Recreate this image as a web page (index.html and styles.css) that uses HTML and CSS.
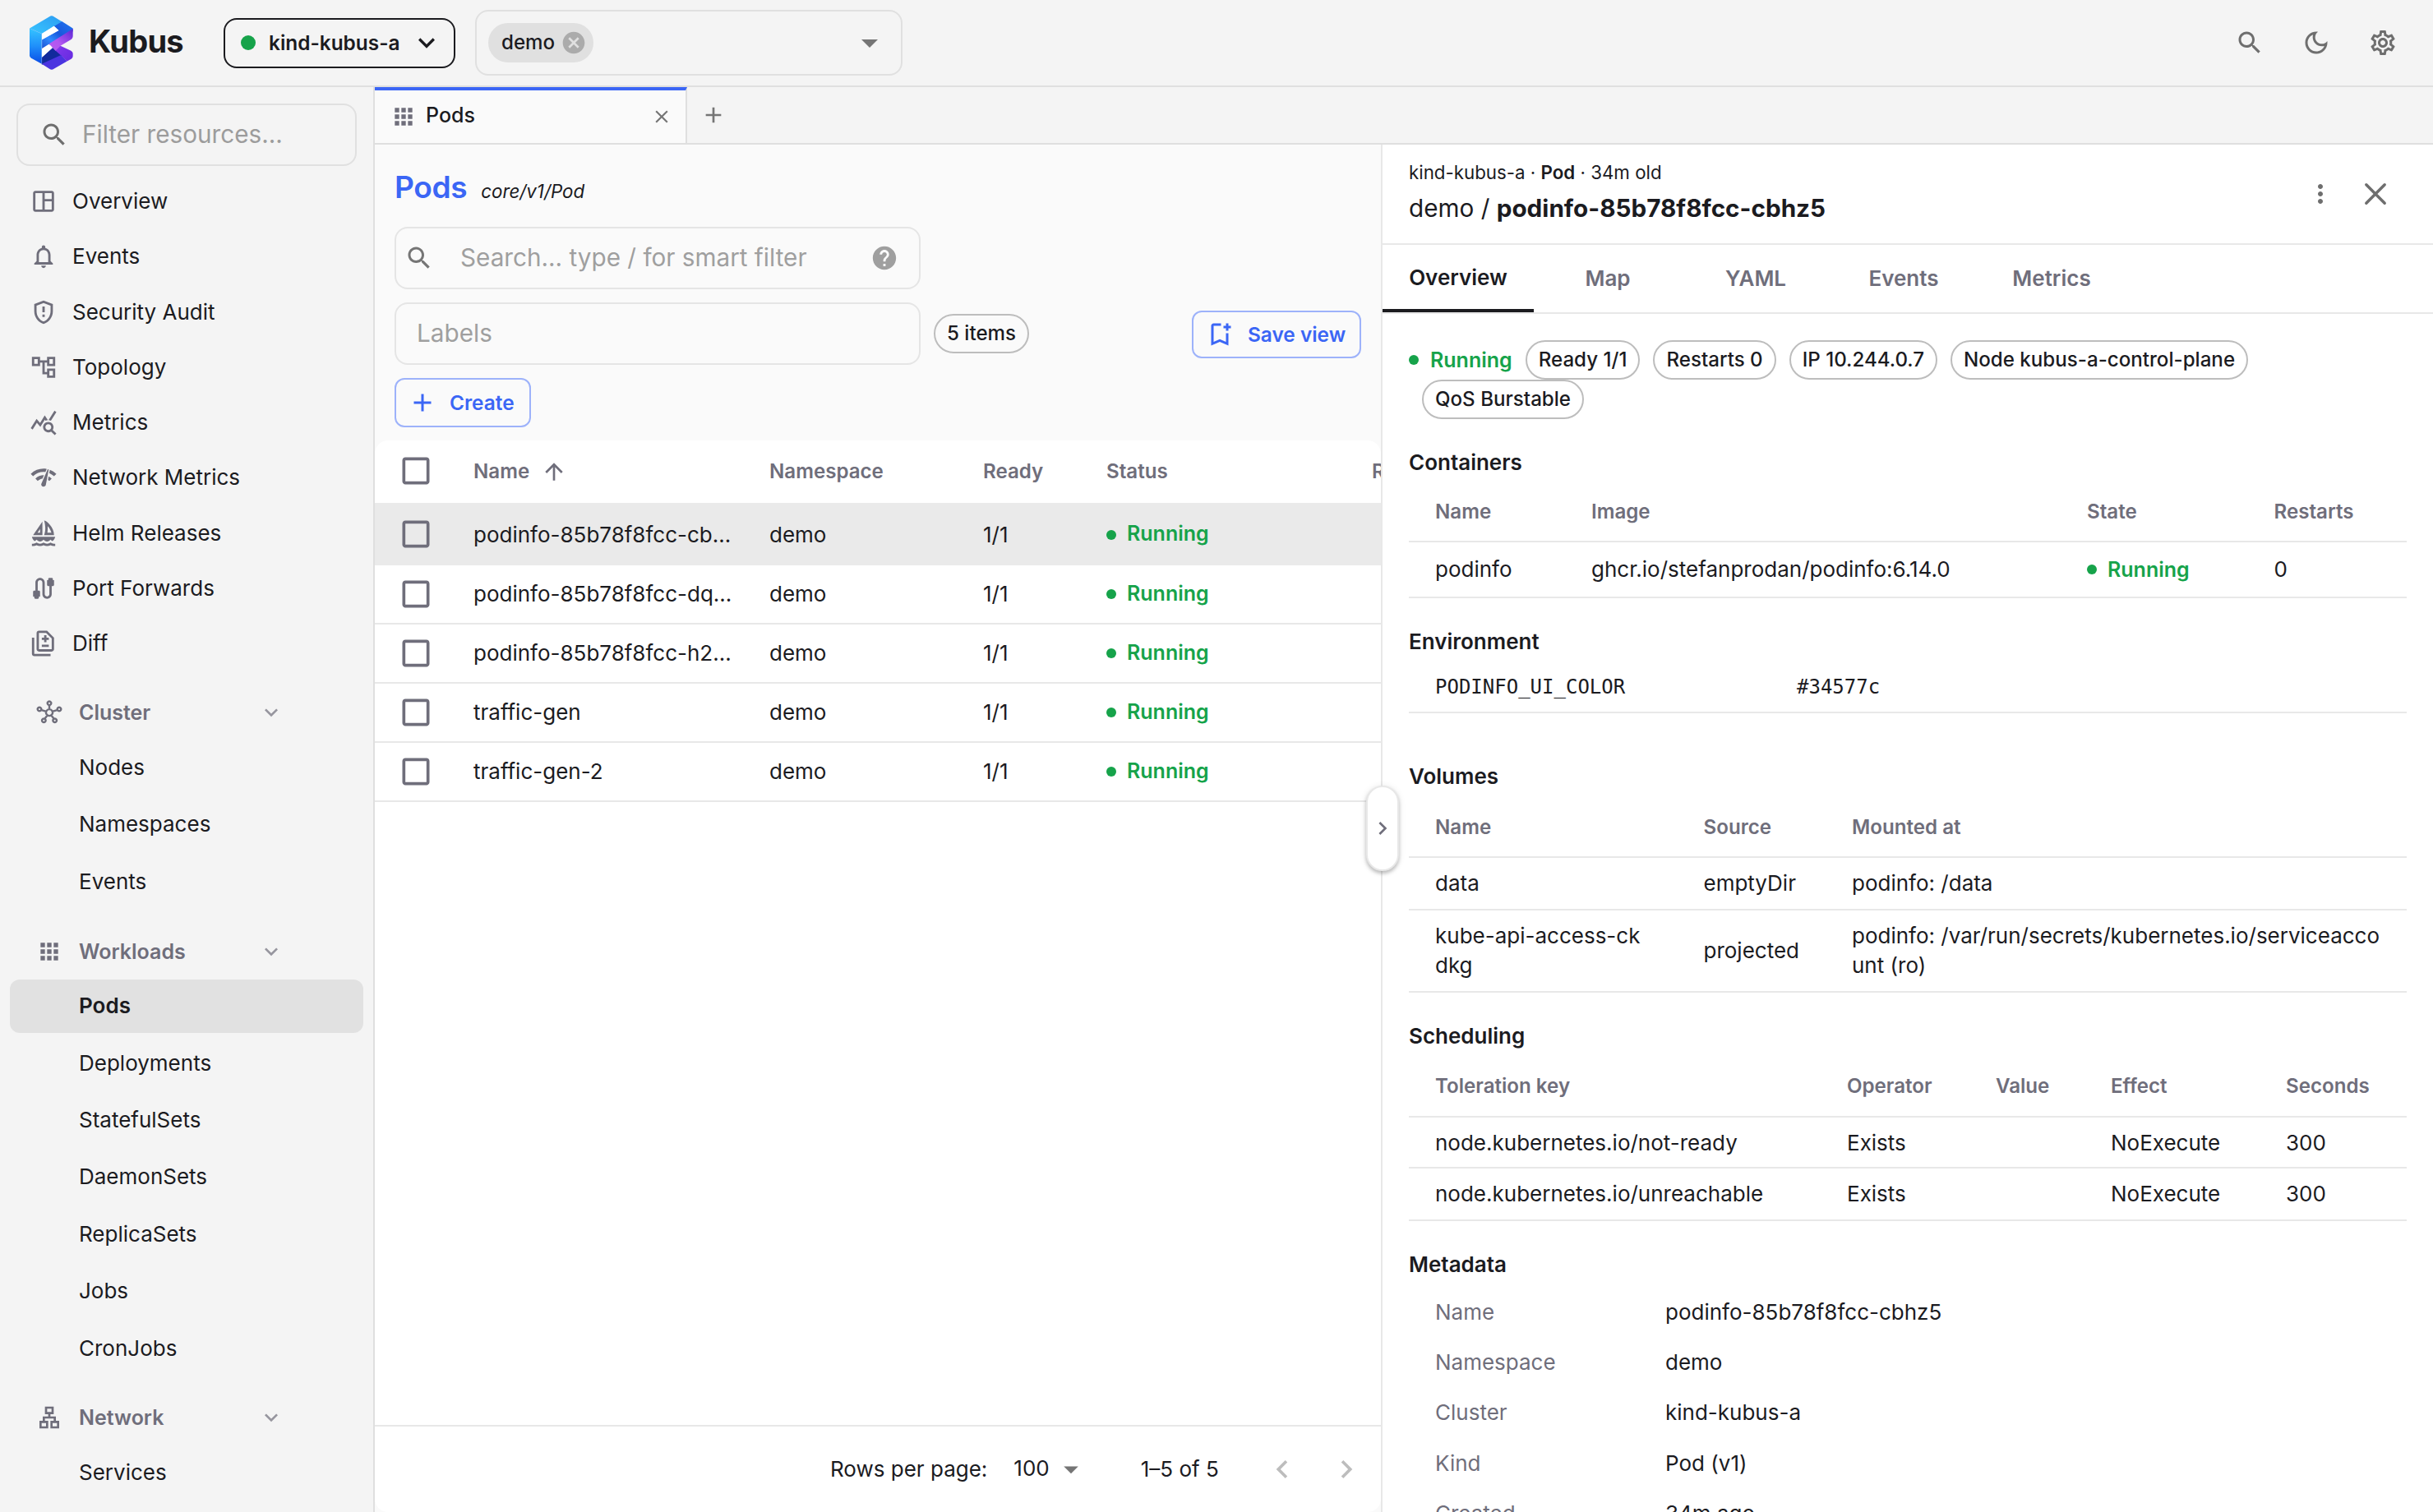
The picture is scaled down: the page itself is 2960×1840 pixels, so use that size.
FILE: index.html
```html
<!DOCTYPE html>
<html lang="en">
<head>
<meta charset="utf-8">
<title>Kubus</title>
<link rel="stylesheet" href="styles.css">
</head>
<body>
<svg class="defs" width="0" height="0" aria-hidden="true">
  <symbol id="search" viewBox="0 0 24 24"><path d="M15.5 14h-.79l-.28-.27C15.41 12.59 16 11.11 16 9.5 16 5.91 13.09 3 9.5 3S3 5.91 3 9.5 5.91 16 9.5 16c1.61 0 3.09-.59 4.23-1.57l.27.28v.79l5 4.99L20.49 19zm-6 0C7.01 14 5 11.99 5 9.5S7.01 5 9.5 5 14 7.01 14 9.5 11.99 14 9.5 14"/></symbol>
  <symbol id="down" viewBox="0 0 24 24"><path d="M7.41 8.59 12 13.17l4.59-4.58L18 10l-6 6-6-6z"/></symbol>
  <symbol id="caret" viewBox="0 0 24 24"><path d="m7 10 5 5 5-5z"/></symbol>
  <symbol id="left" viewBox="0 0 24 24"><path d="M15.41 7.41 14 6l-6 6 6 6 1.41-1.41L10.83 12z"/></symbol>
  <symbol id="right" viewBox="0 0 24 24"><path d="M10 6 8.59 7.41 13.17 12l-4.58 4.59L10 18l6-6z"/></symbol>
  <symbol id="close" viewBox="0 0 24 24"><path d="M19 6.41 17.59 5 12 10.59 6.41 5 5 6.41 10.59 12 5 17.59 6.41 19 12 13.41 17.59 19 19 17.59 13.41 12z"/></symbol>
  <symbol id="add" viewBox="0 0 24 24"><path d="M19 13h-6v6h-2v-6H5v-2h6V5h2v6h6z"/></symbol>
  <symbol id="apps" viewBox="0 0 24 24"><path d="M4 8h4V4H4zm6 12h4v-4h-4zm-6 0h4v-4H4zm0-6h4v-4H4zm6 0h4v-4h-4zm6-10v4h4V4zm-6 4h4V4h-4zm6 6h4v-4h-4zm0 6h4v-4h-4z"/></symbol>
  <symbol id="box" viewBox="0 0 24 24"><path d="M19 5v14H5V5zm0-2H5c-1.1 0-2 .9-2 2v14c0 1.1.9 2 2 2h14c1.1 0 2-.9 2-2V5c0-1.1-.9-2-2-2"/></symbol>
</svg>

<header class="topbar">
  <svg class="logo" viewBox="36 33 158 196">
    <defs>
      <linearGradient id="g1" x1="0" y1="1" x2="1" y2="0"><stop offset="0" stop-color="#38c6ff"/><stop offset="1" stop-color="#2c9cf2"/></linearGradient>
      <linearGradient id="g2" x1="0" y1="0" x2="0" y2="1"><stop offset="0" stop-color="#35c4ff"/><stop offset=".5" stop-color="#1f8ffa"/><stop offset="1" stop-color="#0a4be6"/></linearGradient>
      <linearGradient id="g3" x1="1" y1="0" x2="0" y2="1"><stop offset="0" stop-color="#2277f0"/><stop offset=".45" stop-color="#1857dd"/><stop offset=".7" stop-color="#2f8bff"/><stop offset="1" stop-color="#1a4fd0"/></linearGradient>
      <linearGradient id="g4" x1="1" y1="0" x2="0" y2="1"><stop offset="0" stop-color="#5a25d6"/><stop offset=".6" stop-color="#b257f0"/><stop offset="1" stop-color="#b95cf2"/></linearGradient>
      <linearGradient id="g5" x1="0" y1="0" x2="1" y2=".6"><stop offset="0" stop-color="#b153f0"/><stop offset=".5" stop-color="#7a34e8"/><stop offset="1" stop-color="#6a2de2"/></linearGradient>
    </defs>
    <path fill="url(#g3)" d="M124 70 152 53 193 79V90L107 140 81 154V120L142 86z"/>
    <path fill="#122a9c" d="M80 184 119 149 132 152 158 176 84 210H80z"/>
    <path fill="url(#g1)" d="M36 79 108 36Q116 31 124 36L153 54 80 98z"/>
    <path fill="url(#g5)" d="M107 135 148 142 186 160Q193 164 193 170V180Q193 186 187 190L172 198 150 177 128 158z"/>
    <path fill="url(#g4)" d="M193 80V108Q193 114 188 118L148 142 130 160 107 135z"/>
    <path fill="#4a34e0" d="M80 208 150 176 172 198 124 226Q116 231 108 226z"/>
    <path fill="url(#g2)" d="M36 79 80 98V208L42 187Q36 183 36 178z"/>
    <path fill="none" stroke="#7fb4ff" stroke-width="1.5" opacity=".6" d="M37 79 80 98V207"/>
    <path fill="#fff" d="M81 98 124 71 141 86 81 120zM81 152 106 136 119 150 81 184z"/>
  </svg>
  <span class="brand">Kubus</span>
  <button class="cluster"><i class="dot big"></i><span>kind-kubus-a</span><svg class="i40"><use href="#down"/></svg></button>
  <div class="ns-select">
    <span class="ns-chip">demo<svg class="i32" viewBox="0 0 24 24"><path d="M12 2C6.47 2 2 6.47 2 12s4.47 10 10 10 10-4.47 10-10S17.53 2 12 2m5 13.59L15.59 17 12 13.41 8.41 17 7 15.59 10.59 12 7 8.41 8.41 7 12 10.59 15.59 7 17 8.41 13.41 12z"/></svg></span>
    <svg class="i48"><use href="#caret"/></svg>
  </div>
  <div class="actions">
    <svg class="i36"><use href="#search"/></svg>
    <svg class="i36" viewBox="0 0 24 24"><path d="M9.37 5.51c-.18.64-.27 1.31-.27 1.99 0 4.08 3.32 7.4 7.4 7.4.68 0 1.35-.09 1.99-.27C17.45 17.19 14.93 19 12 19c-3.86 0-7-3.14-7-7 0-2.93 1.81-5.45 4.37-6.49M12 3c-4.97 0-9 4.03-9 9s4.03 9 9 9 9-4.03 9-9c0-.46-.04-.92-.1-1.36-.98 1.37-2.58 2.26-4.4 2.26-2.98 0-5.4-2.42-5.4-5.4 0-1.81.89-3.42 2.26-4.4-.44-.06-.9-.1-1.36-.1"/></svg>
    <svg class="i36" viewBox="0 0 24 24"><path d="M19.43 12.98c.04-.32.07-.64.07-.98s-.03-.66-.07-.98l2.11-1.65c.19-.15.24-.42.12-.64l-2-3.46c-.09-.16-.26-.25-.44-.25-.06 0-.12.01-.17.03l-2.49 1c-.52-.4-1.08-.73-1.69-.98l-.38-2.65C14.46 2.18 14.25 2 14 2h-4c-.25 0-.46.18-.49.42l-.38 2.65c-.61.25-1.17.59-1.69.98l-2.49-1c-.06-.02-.12-.03-.18-.03-.17 0-.34.09-.43.25l-2 3.46c-.13.22-.07.49.12.64l2.11 1.65c-.04.32-.07.65-.07.98s.03.66.07.98l-2.11 1.65c-.19.15-.24.42-.12.64l2 3.46c.09.16.26.25.44.25.06 0 .12-.01.17-.03l2.49-1c.52.4 1.08.73 1.69.98l.38 2.65c.03.24.24.42.49.42h4c.25 0 .46-.18.49-.42l.38-2.65c.61-.25 1.17-.59 1.69-.98l2.49 1c.06.02.12.03.18.03.17 0 .34-.09.43-.25l2-3.46c.12-.22.07-.49-.12-.64zm-1.98-1.71c.04.31.05.52.05.73s-.02.43-.05.73l-.14 1.13.89.7 1.08.84-.7 1.21-1.27-.51-1.04-.42-.9.68c-.43.32-.84.56-1.25.73l-1.06.43-.16 1.13-.2 1.35h-1.4l-.19-1.35-.16-1.13-1.06-.43c-.43-.18-.83-.41-1.23-.71l-.91-.7-1.06.43-1.27.51-.7-1.21 1.08-.84.89-.7-.14-1.13c-.03-.31-.05-.54-.05-.74s.02-.43.05-.73l.14-1.13-.89-.7-1.08-.84.7-1.21 1.27.51 1.04.42.9-.68c.43-.32.84-.56 1.25-.73l1.06-.43.16-1.13.2-1.35h1.39l.19 1.35.16 1.13 1.06.43c.43.18.83.41 1.23.71l.91.7 1.06-.43 1.27-.51.7 1.21-1.07.85-.89.7zM12 8c-2.21 0-4 1.79-4 4s1.79 4 4 4 4-1.79 4-4-1.79-4-4-4m0 6c-1.1 0-2-.9-2-2s.9-2 2-2 2 .9 2 2-.9 2-2 2"/></svg>
  </div>
</header>

<div class="shell">
  <nav class="sidebar">
    <div class="filter"><svg class="i36"><use href="#search"/></svg><span>Filter resources...</span></div>
    <ul class="main-nav">
      <li><svg viewBox="0 0 24 24"><path d="M19 3H5c-1.1 0-2 .9-2 2v14c0 1.1.9 2 2 2h14c1.1 0 2-.9 2-2V5c0-1.1-.9-2-2-2M5 19V5h6v14zm14 0h-6v-7h6zm0-9h-6V5h6z"/></svg>Overview</li>
      <li><svg viewBox="0 0 24 24"><path d="M12 22c1.1 0 2-.9 2-2h-4c0 1.1.9 2 2 2m6-6v-5c0-3.07-1.63-5.64-4.5-6.32V4c0-.83-.67-1.5-1.5-1.5s-1.5.67-1.5 1.5v.68C7.64 5.36 6 7.92 6 11v5l-2 2v1h16v-1zm-2 1H8v-6c0-2.48 1.51-4.5 4-4.5s4 2.02 4 4.5z"/></svg>Events</li>
      <li><svg viewBox="0 0 24 24"><path d="M12 2 4 5v6.09c0 5.05 3.41 9.76 8 10.91 4.59-1.15 8-5.86 8-10.91V5zm6 9.09c0 4-2.55 7.7-6 8.83-3.45-1.13-6-4.82-6-8.83v-4.7l6-2.25 6 2.25zM11 14h2v2h-2zm0-7h2v5h-2z"/></svg>Security Audit</li>
      <li><svg viewBox="0 0 24 24"><path d="M22 11V3h-7v3H9V3H2v8h7V8h2v10h4v3h7v-8h-7v3h-2V8h2v3zM7 9H4V5h3zm10 6h3v4h-3zm0-10h3v4h-3z"/></svg>Topology</li>
      <li><svg viewBox="0 0 24 24"><path d="M19.88 18.47c.44-.7.7-1.51.7-2.39 0-2.49-2.01-4.5-4.5-4.5s-4.5 2.01-4.5 4.5 2.01 4.5 4.49 4.5c.88 0 1.7-.26 2.39-.7L21.58 23 23 21.58zm-3.8.11c-1.38 0-2.5-1.12-2.5-2.5s1.12-2.5 2.5-2.5 2.5 1.12 2.5 2.5-1.12 2.5-2.5 2.5m-.36-8.5c-.74.02-1.45.18-2.1.45l-.55-.83-3.8 6.18-3.01-3.52-3.63 5.81L1 17l5-8 3 3.5L13 6zm2.59.5c-.64-.28-1.33-.45-2.05-.49L21.38 2 23 3.18z"/></svg>Metrics</li>
      <li><svg viewBox="0 0 24 24"><path d="M15.9 5c-.17 0-.32.09-.41.23l-.07.15-5.18 11.65c-.16.29-.26.61-.26.96 0 1.11.9 2.01 2.01 2.01.96 0 1.77-.68 1.96-1.59l.01-.03L16.4 5.5c0-.28-.22-.5-.5-.5M1 9l2 2c2.88-2.88 6.79-4.08 10.53-3.62l1.19-2.68C9.89 3.84 4.74 5.27 1 9m20 2 2-2c-1.64-1.64-3.55-2.82-5.59-3.57l-.53 2.82c1.5.62 2.9 1.53 4.12 2.75m-4 4 2-2c-.8-.8-1.7-1.42-2.66-1.89l-.55 2.92c.42.27.83.59 1.21.97M5 13l2 2c1.13-1.13 2.56-1.79 4.03-2l1.28-2.88c-2.63-.08-5.3.87-7.31 2.88"/></svg>Network Metrics</li>
      <li><svg viewBox="0 0 24 24"><path d="M11 13.5V2L3 13.5zm-2-2H6.83L9 8.38zM21 13.5C21 6.5 14.5 1 12.5 1c0 0 1 3 1 6.5s-1 6-1 6zM15.5 5.8c1.29 1.32 2.65 3.31 3.21 5.7h-3.43c.16-1.19.26-2.56.26-4 0-.6-.01-1.17-.04-1.7M22 15H2c.31 1.53 1.16 2.84 2.33 3.73.65-.31 1.22-.79 1.67-1.3.73.84 1.8 1.57 3 1.57s2.27-.73 3-1.57c.73.84 1.8 1.57 3 1.57s2.27-.73 3-1.57c.45.51 1.02.99 1.67 1.3C20.84 17.84 21.69 16.53 22 15M22 23v-2h-1c-1.04 0-2.08-.35-3-1-1.83 1.3-4.17 1.3-6 0-1.83 1.3-4.17 1.3-6 0-.91.65-1.96 1-3 1H2v2h1c1.03 0 2.05-.25 3-.75 1.89 1 4.11 1 6 0 1.89 1 4.11 1 6 0 .95.5 1.97.75 3 .75z"/></svg>Helm Releases</li>
      <li><svg viewBox="0 0 24 24"><path d="M20 5V4c0-.55-.45-1-1-1h-2c-.55 0-1 .45-1 1v1h-1v4c0 .55.45 1 1 1h1v7c0 1.1-.9 2-2 2s-2-.9-2-2V7c0-2.21-1.79-4-4-4S5 4.79 5 7v7H4c-.55 0-1 .45-1 1v4h1v1c0 .55.45 1 1 1h2c.55 0 1-.45 1-1v-1h1v-4c0-.55-.45-1-1-1H7V7c0-1.1.9-2 2-2s2 .9 2 2v10c0 2.21 1.79 4 4 4s4-1.79 4-4v-7h1c.55 0 1-.45 1-1V5z"/></svg>Port Forwards</li>
      <li><svg viewBox="0 0 24 24"><path d="M18 23H4c-1.1 0-2-.9-2-2V7h2v14h14zM14.5 7V5h-2v2h-2v2h2v2h2V9h2V7zm2 6h-6v2h6zM15 1H8c-1.1 0-1.99.9-1.99 2L6 17c0 1.1.89 2 1.99 2H19c1.1 0 2-.9 2-2V7zm4 16H8V3h6.17L19 7.83z"/></svg>Diff</li>
    </ul>
    <section class="group">
      <h3><svg class="i32" viewBox="0 0 24 24"><path fill="none" stroke="currentColor" stroke-width="1.8" d="M12 5.6v3.6M5 9.8l4.2 1.4M19 9.8l-4.2 1.4M8.2 17.2l2-2.6M15.8 17.2l-2-2.6M12 1.9a1.7 1.7 0 1 0 .01 0M3 7.3a1.7 1.7 0 1 0 .01 0M21 7.3a1.7 1.7 0 1 0 .01 0M7 17.6a1.7 1.7 0 1 0 .01 0M17 17.6a1.7 1.7 0 1 0 .01 0M12 9.1a3 3 0 1 0 .01 0"/></svg>Cluster<svg class="i32 exp"><use href="#down"/></svg></h3>
      <ul><li>Nodes</li><li>Namespaces</li><li>Events</li></ul>
    </section>
    <section class="group">
      <h3><svg class="i32"><use href="#apps"/></svg>Workloads<svg class="i32 exp"><use href="#down"/></svg></h3>
      <ul><li class="active">Pods</li><li>Deployments</li><li>StatefulSets</li><li>DaemonSets</li><li>ReplicaSets</li><li>Jobs</li><li>CronJobs</li></ul>
    </section>
    <section class="group">
      <h3><svg class="i32" viewBox="0 0 24 24"><path d="M13 22h8v-7h-3v-4h-5V9h3V2H8v7h3v2H6v4H3v7h8v-7H8v-2h8v2h-3zM10 7V4h4v3zM9 17v3H5v-3zm10 0v3h-4v-3z"/></svg>Network<svg class="i32 exp"><use href="#down"/></svg></h3>
      <ul><li>Services</li></ul>
    </section>
  </nav>

  <div class="workspace">
    <div class="tabstrip">
      <div class="tab"><svg class="i32"><use href="#apps"/></svg><span>Pods</span><svg class="i26 x"><use href="#close"/></svg></div>
      <svg class="i32 new"><use href="#add"/></svg>
    </div>
    <div class="panes">
      <main class="list">
        <div class="toolbar">
          <h1>Pods <em>core/v1/Pod</em></h1>
          <div class="field search"><svg class="i36"><use href="#search"/></svg><span>Search... type / for smart filter</span><svg class="i34 help" viewBox="0 0 24 24"><path d="M12 2C6.48 2 2 6.48 2 12s4.48 10 10 10 10-4.48 10-10S17.52 2 12 2m1 17h-2v-2h2zm2.07-7.75-.9.92C13.45 12.9 13 13.5 13 15h-2v-.5c0-1.1.45-2.1 1.17-2.83l1.24-1.26c.37-.36.59-.86.59-1.41 0-1.1-.9-2-2-2s-2 .9-2 2H8c0-2.21 1.79-4 4-4s4 1.79 4 4c0 .88-.36 1.68-.93 2.25"/></svg></div>
          <div class="row">
            <div class="field labels"><span>Labels</span></div>
            <span class="chip">5 items</span>
            <button class="btn save"><svg class="i36" viewBox="0 0 24 24"><path d="M17 11v6.97l-5-2.14-5 2.14V5h6V3H7c-1.1 0-2 .9-2 2v16l7-3 7 3V11zm4-4h-2v2h-2V7h-2V5h2V3h2v2h2z"/></svg>Save view</button>
          </div>
          <button class="btn create"><svg class="i36"><use href="#add"/></svg>Create</button>
        </div>
        <div class="grid">
          <div class="gr head"><svg class="i44"><use href="#box"/></svg><span class="sort">Name<svg class="i32" viewBox="0 0 24 24"><path d="m4 12 1.41 1.41L11 7.83V20h2V7.83l5.58 5.59L20 12l-8-8z"/></svg></span><span>Namespace</span><span>Ready</span><span>Status</span><span class="clip">Restarts</span></div>
          <div class="gr sel"><svg class="i44"><use href="#box"/></svg><span>podinfo-85b78f8fcc-cb...</span><span>demo</span><span>1/1</span><span class="run"><i class="dot"></i>Running</span></div>
          <div class="gr"><svg class="i44"><use href="#box"/></svg><span>podinfo-85b78f8fcc-dq...</span><span>demo</span><span>1/1</span><span class="run"><i class="dot"></i>Running</span></div>
          <div class="gr"><svg class="i44"><use href="#box"/></svg><span>podinfo-85b78f8fcc-h2...</span><span>demo</span><span>1/1</span><span class="run"><i class="dot"></i>Running</span></div>
          <div class="gr"><svg class="i44"><use href="#box"/></svg><span>traffic-gen</span><span>demo</span><span>1/1</span><span class="run"><i class="dot"></i>Running</span></div>
          <div class="gr"><svg class="i44"><use href="#box"/></svg><span>traffic-gen-2</span><span>demo</span><span>1/1</span><span class="run"><i class="dot"></i>Running</span></div>
          <div class="pager"><span class="rpp">Rows per page:</span><span class="size">100</span><svg class="i42"><use href="#caret"/></svg><span class="range">1–5 of 5</span><svg class="i44 off"><use href="#left"/></svg><svg class="i44 off next"><use href="#right"/></svg></div>
        </div>
      </main>

      <aside class="detail">
        <button class="handle"><svg class="i32"><use href="#right"/></svg></button>
        <div class="dhead">
          <div><p class="crumb">kind-kubus-a · <b>Pod</b> · 34m old</p><h2>demo / <b>podinfo-85b78f8fcc-cbhz5</b></h2></div>
          <svg class="i36 more" viewBox="0 0 24 24"><path d="M12 8c1.1 0 2-.9 2-2s-.9-2-2-2-2 .9-2 2 .9 2 2 2m0 2c-1.1 0-2 .9-2 2s.9 2 2 2 2-.9 2-2-.9-2-2-2m0 6c-1.1 0-2 .9-2 2s.9 2 2 2 2-.9 2-2-.9-2-2-2"/></svg>
          <svg class="i44" viewBox="0 0 24 24"><path fill="none" stroke="currentColor" stroke-width="1.9" stroke-linecap="round" d="M5.9 5.9 18.1 18.1M18.1 5.9 5.9 18.1"/></svg>
        </div>
        <div class="dtabs"><span class="on">Overview</span><span>Map</span><span>YAML</span><span>Events</span><span>Metrics</span></div>
        <div class="dbody">
          <div class="chips"><span class="run"><i class="dot"></i>Running</span><span class="chip">Ready 1/1</span><span class="chip">Restarts 0</span><span class="chip">IP 10.244.0.7</span><span class="chip">Node kubus-a-control-plane</span><span class="chip">QoS Burstable</span></div>
          <h4>Containers</h4>
          <div class="tb containers">
            <div class="th"><span>Name</span><span>Image</span><span>State</span><span>Restarts</span></div>
            <div class="tr"><span>podinfo</span><span>ghcr.io/stefanprodan/podinfo:6.14.0</span><span class="run"><i class="dot"></i>Running</span><span>0</span></div>
          </div>
          <h4>Environment</h4>
          <div class="tb env"><div class="tr"><span>PODINFO_UI_COLOR</span><span>#34577c</span></div></div>
          <h4>Volumes</h4>
          <div class="tb volumes">
            <div class="th"><span>Name</span><span>Source</span><span>Mounted at</span></div>
            <div class="tr"><span>data</span><span>emptyDir</span><span>podinfo: /data</span></div>
            <div class="tr tall"><span>kube-api-access-ck<br>dkg</span><span>projected</span><span>podinfo: /var/run/secrets/kubernetes.io/serviceacco<br>unt (ro)</span></div>
          </div>
          <h4>Scheduling</h4>
          <div class="tb sched">
            <div class="th"><span>Toleration key</span><span>Operator</span><span>Value</span><span>Effect</span><span>Seconds</span></div>
            <div class="tr first"><span>node.kubernetes.io/not-ready</span><span>Exists</span><span></span><span>NoExecute</span><span>300</span></div>
            <div class="tr"><span>node.kubernetes.io/unreachable</span><span>Exists</span><span></span><span>NoExecute</span><span>300</span></div>
          </div>
          <h4>Metadata</h4>
          <dl class="meta">
            <dt>Name</dt><dd>podinfo-85b78f8fcc-cbhz5</dd>
            <dt>Namespace</dt><dd>demo</dd>
            <dt>Cluster</dt><dd>kind-kubus-a</dd>
            <dt>Kind</dt><dd>Pod (v1)</dd>
            <dt>Created</dt><dd>34m ago</dd>
          </dl>
        </div>
      </aside>
    </div>
  </div>
</div>
</body>
</html>
```
FILE: styles.css
```css
* { box-sizing: border-box; margin: 0; padding: 0; }
html, body { width: 2960px; height: 1840px; overflow: hidden; }
body {
  display: flex; flex-direction: column;
  font: 400 26px/36px Inter, "Liberation Sans", sans-serif;
  color: #1b1b1f; background: #f4f4f4;
}
ul { list-style: none; }
svg { display: block; flex: none; fill: currentColor; }
button { font: inherit; color: inherit; background: none; }
.defs { position: absolute; }
.i26 { width: 26px; height: 26px; }
.i32 { width: 32px; height: 32px; }
.i34 { width: 34px; height: 34px; }
.i36 { width: 36px; height: 36px; }
.i40 { width: 40px; height: 40px; }
.i42 { width: 42px; height: 42px; }
.i44 { width: 44px; height: 44px; }
.i48 { width: 48px; height: 48px; }

/* top bar */
.topbar { display: flex; align-items: center; height: 106px; border-bottom: 2px solid #dfdfdf; padding-left: 36px; flex: none; }
.logo { width: 53px; height: 66px; }
.brand { width: 164px; margin-left: 19px; font-size: 38px; font-weight: 700; letter-spacing: -.02em; line-height: 60px; padding-bottom: 4px; }
.cluster { display: flex; align-items: center; width: 282px; height: 61px; padding-left: 19px; border: 2px solid #1b1b1f; border-radius: 16px; font-weight: 600; font-size: 24.4px; }
.cluster span { margin-left: 16px; width: 172px; text-align: left; white-space: nowrap; }
.dot { display: block; flex: none; width: 12px; height: 12px; border-radius: 50%; background: #16a34a; }
.dot.big { width: 18px; height: 18px; }
.ns-select { display: flex; align-items: center; justify-content: space-between; width: 520px; height: 80px; margin-left: 24px; padding: 0 14px; border: 2px solid #e0e0e0; border-radius: 16px; color: #757575; }
.ns-chip { display: flex; align-items: center; height: 48px; padding: 0 8px 0 16px; border-radius: 24px; background: #e0e0e0; color: #1b1b1f; font-size: 24.14px; font-weight: 500; gap: 7px; }
.ns-chip svg { color: #ababab; }
.actions { display: flex; margin-left: auto; gap: 45.5px; padding-right: 43px; color: #6e6e6e; }
.actions svg:first-child { margin-right: -1px; }

.shell { display: flex; flex: 1; min-height: 0; }

/* sidebar */
.sidebar { width: 456px; flex: none; border-right: 2px solid #dfdfdf; overflow: hidden; }
.filter { display: flex; align-items: center; width: 414px; height: 76px; margin: 20px 0 9.5px 20px; padding-left: 26px; border: 2px solid #e0e0e0; border-radius: 16px; font-size: 29.7px; color: #9c9c9c; }
.filter svg { color: #6e6e6e; margin-right: 16px; }
.filter span { padding-bottom: 2px; }
.main-nav li { display: flex; align-items: center; height: 67.28px; padding-left: 36px; gap: 18px; }
.main-nav svg { width: 34px; height: 34px; color: #6f6e7b; }
.group h3 { display: flex; align-items: center; height: 82px; padding: 19px 0 0 44px; gap: 20px; font-size: 25px; font-weight: 600; color: #6f6e7b; }
.exp { margin-left: auto; margin-right: 108px; opacity: .7; }
.group li { display: flex; align-items: center; height: 65.4px; margin: 0 12px 4px; padding-left: 84px; border-radius: 12px; }
.group ul { padding-top: 2.5px; margin-bottom: -2.5px; }
.active { background: #e1e1e1; font-weight: 600; }

/* tabs */
.workspace { display: flex; flex-direction: column; flex: 1; min-width: 0; }
.tabstrip { display: flex; height: 70px; flex: none; border-bottom: 2px solid #dfdfdf; }
.tab { display: flex; align-items: center; width: 380px; border-top: 4px solid #3b66f5; border-right: 2px solid #dfdfdf; background: #fafafa; padding: 0 22px 0 19px; font-size: 25px; font-weight: 500; }
.tab span { padding: 0 0 4px 11px; }
.tab svg { color: #6f6e7b; }
.tab .x { margin-left: auto; margin-right: -6px; color: #757575; }
.new { margin: 18px 0 0 16px; color: #757575; }

.panes { display: flex; flex: 1; min-height: 0; }

/* resource list */
.list { width: 1224px; flex: none; display: flex; flex-direction: column; background: #fafafa; }
.toolbar { padding: 28px 24px 16px; display: flex; flex-direction: column; align-items: flex-start; gap: 16px; }
h1 { display: flex; align-items: baseline; height: 48px; margin-bottom: 8px; font-size: 37.1px; line-height: 48px; font-weight: 600; letter-spacing: -.01em; color: #3b66f5; gap: 17px; }
h1 em { font-size: 22.3px; font-weight: 400; letter-spacing: 0; color: #1b1b1f; }
.field { display: flex; align-items: center; width: 640px; height: 76px; border: 2px solid #e5e5e5; border-radius: 16px; font-size: 29.7px; color: #9f9f9f; }
.field span { padding-bottom: 2px; }
.search { padding: 0 25px 0 10px; }
.search svg:first-child { color: #757575; margin-right: 32px; }
.help { margin-left: auto; }
.labels { padding-left: 25px; }
.row { display: flex; align-items: center; align-self: stretch; }
.chip { display: flex; align-items: center; height: 48px; margin-left: 16px; padding: 0 14px; border: 2px solid #bdbdbd; border-radius: 24px; font-size: 24.14px; font-weight: 500; white-space: nowrap; }
.btn { display: flex; align-items: center; border: 2px solid #9db2fa; border-radius: 12px; color: #3b66f5; font-size: 24.4px; font-weight: 600; gap: 16px; }
.save { width: 206px; height: 58px; margin: 2px 0 0 auto; padding-left: 14px; white-space: nowrap; }
.create { width: 166px; height: 60px; padding-left: 14px; gap: 15px; }

.grid { display: flex; flex-direction: column; flex: 1; background: #fff; border-radius: 16px; overflow: hidden; }
.gr { display: grid; grid-template-columns: 92px 360px 260px 150px 323px 1fr; align-items: center; height: 72px; padding-left: 28px; border-bottom: 2px solid #e8e8e8; flex: none; white-space: nowrap; }
.gr svg:first-child { color: #6f6e7b; margin-top: -1px; }
.gr.head { height: 76px; border: 0; font-size: 24.14px; font-weight: 600; color: #6f6e7b; }
.gr.head > svg { margin-top: -3px; }
.gr.sel { height: 76px; padding-top: 3px; background: #eaeaea; border-color: #eaeaea; }
.clip { min-width: 0; overflow: hidden; }
.sort { display: flex; align-items: center; gap: 14px; }
.sort svg { color: #757575; }
.run { display: flex; align-items: center; color: #16a34a; font-weight: 600; font-size: 25px; gap: 13px; }
.gr .run { padding-bottom: 3px; }
.gr .run .dot { margin-top: 3px; }
.pager { display: flex; align-items: center; margin-top: auto; height: 106px; border-top: 2px solid #e8e8e8; padding-left: 554px; flex: none; }
.size { margin: -3px 0 0 32px; }
.pager .size + svg { margin-left: 5px; color: #757575; }
.range { margin-left: 64px; }
.off { color: #bdbdbd; margin-left: 55px; }
.next { margin-left: 34px; }

/* detail drawer */
.detail { position: relative; flex: 1; background: #fff; border-left: 2px solid #e8e8e8; min-width: 0; }
.handle { position: absolute; left: -20px; top: 780px; width: 40px; height: 104px; display: flex; align-items: center; justify-content: center; border: 2px solid #e8e8e8; border-radius: 20px; background: #fff; color: #6f6e7b; box-shadow: 0 3px 4px rgba(0,0,0,.22), 0 1px 8px rgba(0,0,0,.1); z-index: 2; }
.dhead { display: flex; height: 122px; border-bottom: 2px solid #e8e8e8; padding: 15px 48px 0 32px; color: #6e6e6e; }
.dhead div { flex: 1; color: #1b1b1f; }
.crumb { font-size: 22.3px; line-height: 37px; }
.crumb b { font-weight: 600; }
h2 { font-size: 29.7px; line-height: 50px; font-weight: 400; }
.dhead svg { margin-top: 23px; }
.dhead .more { margin: 27px 27px 0 0; }
.dtabs { display: flex; height: 84px; border-bottom: 2px solid #e8e8e8; font-weight: 600; color: #6f6e7b; }
.dtabs span { width: 180px; display: flex; align-items: center; justify-content: center; padding-bottom: 1px; }
.dtabs .on { width: 184px; color: #1b1b1f; border-bottom: 4px solid #1b1b1f; border-radius: 2px 2px 0 0; padding-top: 3px; }
.dbody { padding: 32px 32px 0; }
.chips { display: flex; flex-wrap: wrap; align-items: center; height: 96px; }
.chips .run { height: 48px; gap: 14px; padding-bottom: 1px; }
h4 { margin-top: 29px; font-size: 26px; font-weight: 600; line-height: 48px; height: 48px; }
.th, .tr { display: grid; align-items: center; padding-left: 32px; border-bottom: 2px solid #e8e8e8; white-space: nowrap; }
.th { height: 75px; padding-top: 1px; font-size: 24.14px; font-weight: 600; color: #6f6e7b; }
.tr { height: 64px; }
.containers .th, .containers .tr { grid-template-columns: 190px 603px 227.5px 1fr; }
.containers .th { height: 73px; }
.containers .tr { height: 68px; }
.env { margin-bottom: 53px; }
.env .tr { height: 63px; grid-template-columns: 440px 1fr; font: 24px/34px "DejaVu Sans Mono", monospace; }
.volumes .th, .volumes .tr { grid-template-columns: 326.5px 180.5px 1fr; }
.volumes .th { padding-top: 2px; }
.volumes .tall { height: 100px; }
.sched .th, .sched .tr { grid-template-columns: 501px 181px 140px 213px 1fr; }
.sched .first { height: 62px; padding-top: 1px; }
.meta { display: grid; grid-template-columns: 280px 1fr; grid-auto-rows: 61.3px; align-items: center; padding: 3px 0 0 32px; }
.meta dt { color: #6f6e7b; }
```
